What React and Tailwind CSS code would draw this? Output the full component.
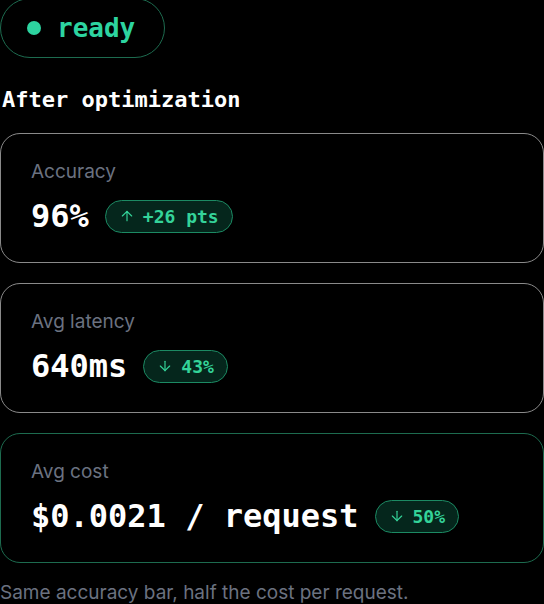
import { ArrowDown, ArrowUp } from 'lucide-react';

const mono = { fontFamily: '"DejaVu Sans Mono", "Liberation Mono", monospace' };

function Metric({ label, value, delta, up, highlight }) {
  const Arrow = up ? ArrowUp : ArrowDown;
  return (
    <div
      className={`rounded-[20px] border bg-black px-[30px] pt-6 pb-[26px] ${
        highlight ? 'border-[#1d6b4f]' : 'border-[#8a8a8a]'
      }`}
    >
      <p className="font-['Inter',sans-serif] text-[19px] leading-[28px] text-[#6b7280]">{label}</p>
      <div className="mt-2.5 flex items-center gap-4">
        <span className="text-[32px] leading-[40px] font-bold text-white" style={mono}>
          {value}
        </span>
        <span
          className="flex h-[33px] items-center gap-2 rounded-full border border-[#1c8a63] bg-[#05261c] px-[13px] text-[18px] font-bold text-[#34d399]"
          style={mono}
        >
          <Arrow size={16} strokeWidth={1.75} />
          {delta}
        </span>
      </div>
    </div>
  );
}

export default function App() {
  return (
    <div className="min-h-[604px] overflow-hidden bg-black text-white">
      <div className="-mt-0.5 flex">
        <div className="flex h-[60px] items-center gap-4 rounded-full border border-[#1d6b4f] pr-[29px] pl-[26px]">
          <span className="h-[14px] w-[14px] rounded-full bg-[#2dd4a0]" />
          <span className="text-[26px] font-bold text-[#2dd4a0]" style={mono}>
            ready
          </span>
        </div>
      </div>

      <h2 className="mt-7 pl-0.5 text-[22px] leading-[28px] font-bold text-white" style={mono}>
        After optimization
      </h2>

      <div className="mt-[19px] flex flex-col gap-5">
        <Metric label="Accuracy" value="96%" delta="+26 pts" up />
        <Metric label="Avg latency" value="640ms" delta="43%" />
        <Metric label="Avg cost" value="$0.0021 / request" delta="50%" highlight />
      </div>

      <p className="mt-4 font-['Inter',sans-serif] text-[19px] leading-[28px] text-[#6b7280]">
        Same accuracy bar, half the cost per request.
      </p>
    </div>
  );
}
